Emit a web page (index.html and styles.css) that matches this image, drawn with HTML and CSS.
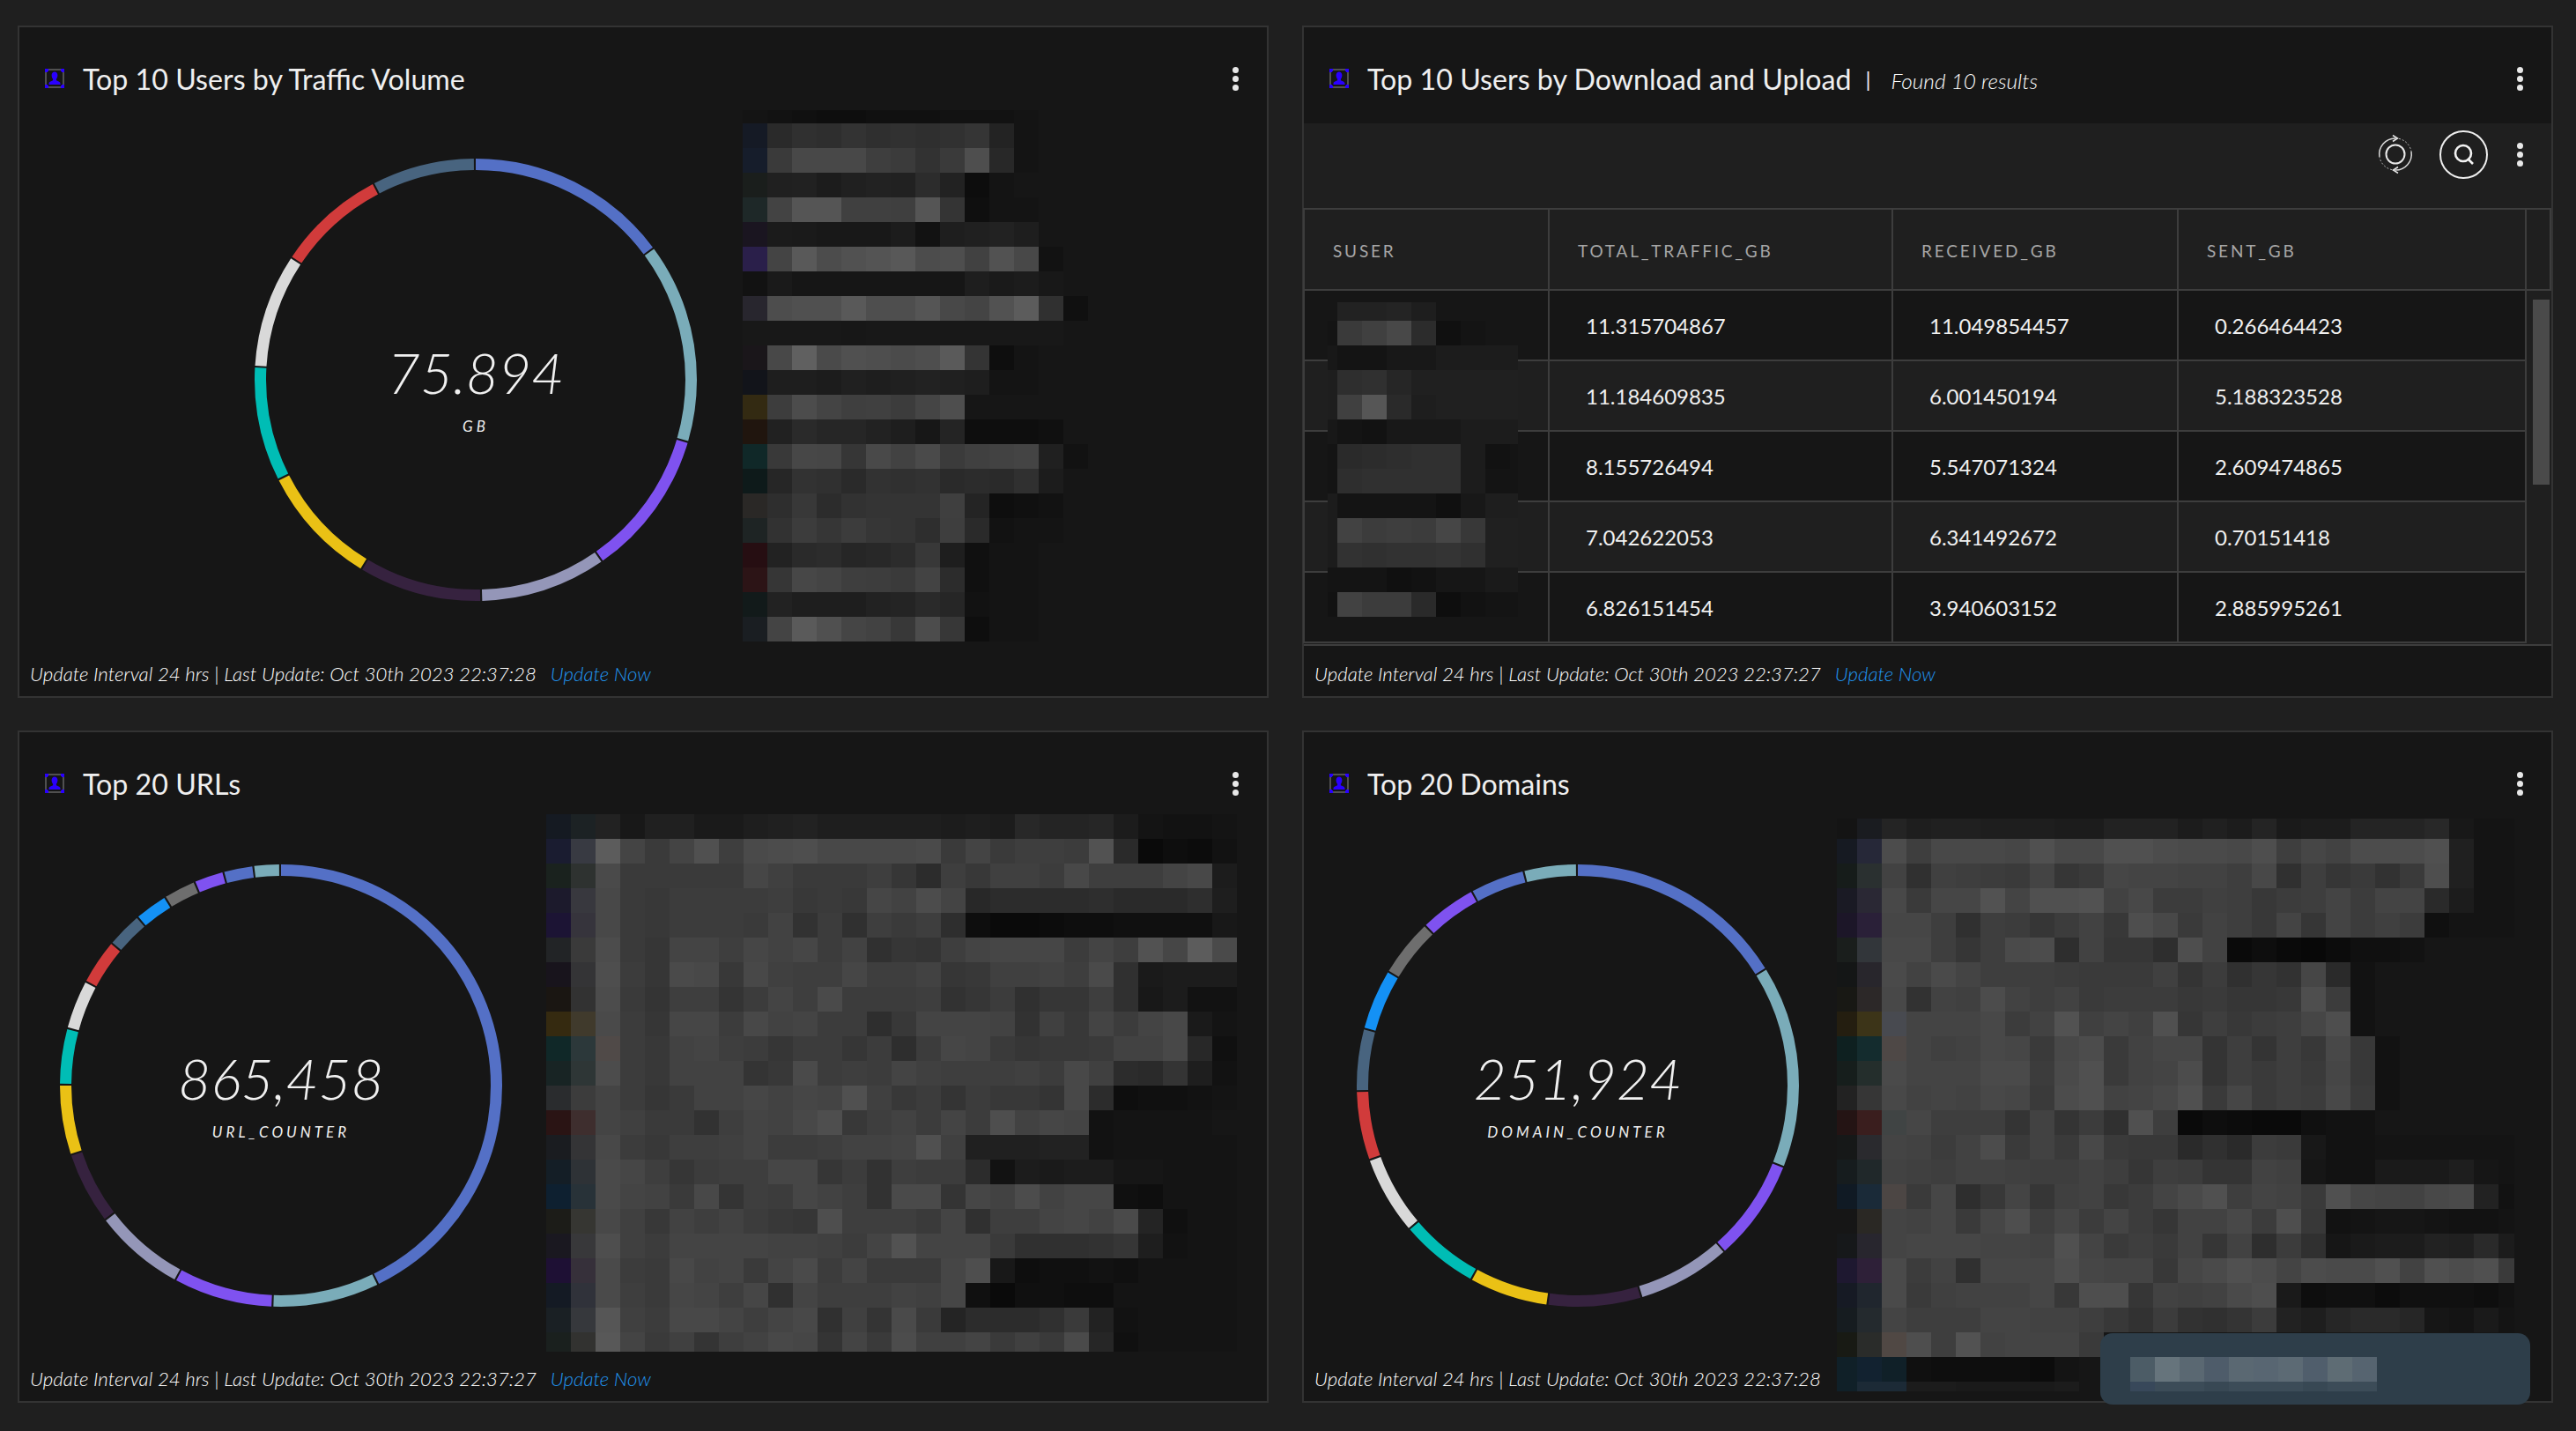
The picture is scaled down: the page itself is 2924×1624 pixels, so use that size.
FILE: index.html
```html
<!DOCTYPE html>
<html lang="en">
<head>
    <meta charset="UTF-8">
    <title>User Traffic Dashboard</title>
    <link rel="stylesheet" href="styles.css">
</head>
<body>
    <svg class="sprite" width="0" height="0">
        <symbol id="user-icon" viewBox="0 0 22 22">
            <rect x="1" y="1" width="20" height="20" fill="none" stroke="#8a8a8a"/>
            <path d="M0 0h4v3H3v1H0zM18 0h4v4h-3V3h-1zM0 18h3v1h1v3H0zM19 18h3v4h-4v-3h1z" fill="#2a00ff"/>
            <path d="M11 3.5c2.2 0 3.4 1.9 3.4 4 0 1.800-.8 3.300-1.500 4.200v1.500c2.400.8 4.600 1.700 4.600 3.600v1.200h-13v-1.200c0-1.900 2.200-2.800 4.600-3.600v-1.500c-.7-.9-1.500-2.400-1.500-4.200 0-2.100 1.200-4 3.400-4z" fill="#2a00ff"/>
        </symbol>
    </svg>

    <div class="dashboard">
        <section class="card">
            <header class="card-head">
                <svg class="user-icon"><use href="#user-icon"/></svg>
                <h2 class="card-title">Top 10 Users by Traffic Volume</h2>
                <div class="dots"><span></span><span></span><span></span></div>
            </header>
            <div class="chart-body">
                <div class="donut-wrap donut-traffic">
                    <svg class="donut" id="donut-traffic" viewBox="0 0 502 502"></svg>
                    <div class="donut-center">
                        <div class="donut-value">75.894</div>
                        <div class="donut-label">GB</div>
                    </div>
                </div>
                <div class="mosaic mosaic-traffic" id="mosaic-traffic"></div>
            </div>
            <footer class="card-foot">
                <span>Update Interval 24 hrs | Last Update: Oct 30th 2023 22:37:28</span>
                <a class="update-link">Update Now</a>
            </footer>
        </section>

        <section class="card">
            <header class="card-head">
                <svg class="user-icon"><use href="#user-icon"/></svg>
                <h2 class="card-title">Top 10 Users by Download and Upload</h2>
                <span class="title-sep">|</span>
                <span class="title-note">Found 10 results</span>
                <div class="dots"><span></span><span></span><span></span></div>
            </header>
            <div class="toolbar">
                <svg class="refresh-icon" viewBox="0 0 44 44">
                    <circle cx="22" cy="22" r="10.500" fill="none" stroke="#e8e8e8" stroke-width="2"/>
                    <path d="M4 25A18 18 0 0 1 22 4M40 19A18 18 0 0 1 22 40" fill="none" stroke="#d8d8d8" stroke-width="1.500"/>
                    <path d="M22 4A18 18 0 0 1 40 19M22 40A18 18 0 0 1 4 25" fill="none" stroke="#bdbdbd" stroke-width="1" stroke-dasharray="2 2"/>
                    <path d="M19 0.500L24.500 4L19 7.500M25 36.500L19.500 40L25 43.500" fill="none" stroke="#e8e8e8" stroke-width="1.500"/>
                </svg>
                <div class="search-btn">
                    <svg viewBox="0 0 28 28">
                        <circle cx="13" cy="13" r="9" fill="none" stroke="#f2f2f2" stroke-width="2.600"/>
                        <path d="M18 19L24 25" stroke="#f2f2f2" stroke-width="2.600"/>
                    </svg>
                </div>
                <div class="dots"><span></span><span></span><span></span></div>
            </div>
            <div class="table-wrap">
                <table class="data-table">
                    <thead>
                        <tr>
                            <th class="col-user">SUSER</th>
                            <th class="col-total">TOTAL_TRAFFIC_GB</th>
                            <th class="col-recv">RECEIVED_GB</th>
                            <th class="col-sent">SENT_GB</th>
                            <th class="col-gutter"></th>
                        </tr>
                    </thead>
                    <tbody>
                        <tr><td></td><td>11.315704867</td><td>11.049854457</td><td>0.266464423</td></tr>
                        <tr><td></td><td>11.184609835</td><td>6.001450194</td><td>5.188323528</td></tr>
                        <tr><td></td><td>8.155726494</td><td>5.547071324</td><td>2.609474865</td></tr>
                        <tr><td></td><td>7.042622053</td><td>6.341492672</td><td>0.70151418</td></tr>
                        <tr><td></td><td>6.826151454</td><td>3.940603152</td><td>2.885995261</td></tr>
                    </tbody>
                </table>
                <div class="mosaic mosaic-users" id="mosaic-users"></div>
                <div class="scroll-thumb"></div>
            </div>
            <footer class="card-foot">
                <span>Update Interval 24 hrs | Last Update: Oct 30th 2023 22:37:27</span>
                <a class="update-link">Update Now</a>
            </footer>
        </section>

        <section class="card">
            <header class="card-head">
                <svg class="user-icon"><use href="#user-icon"/></svg>
                <h2 class="card-title">Top 20 URLs</h2>
                <div class="dots"><span></span><span></span><span></span></div>
            </header>
            <div class="chart-body">
                <div class="donut-wrap donut-urls">
                    <svg class="donut" id="donut-urls" viewBox="0 0 502 502"></svg>
                    <div class="donut-center">
                        <div class="donut-value">865,458</div>
                        <div class="donut-label">URL_COUNTER</div>
                    </div>
                </div>
                <div class="mosaic mosaic-urls" id="mosaic-urls"></div>
            </div>
            <footer class="card-foot">
                <span>Update Interval 24 hrs | Last Update: Oct 30th 2023 22:37:27</span>
                <a class="update-link">Update Now</a>
            </footer>
        </section>

        <section class="card">
            <header class="card-head">
                <svg class="user-icon"><use href="#user-icon"/></svg>
                <h2 class="card-title">Top 20 Domains</h2>
                <div class="dots"><span></span><span></span><span></span></div>
            </header>
            <div class="chart-body">
                <div class="donut-wrap donut-domains">
                    <svg class="donut" id="donut-domains" viewBox="0 0 502 502"></svg>
                    <div class="donut-center">
                        <div class="donut-value">251,924</div>
                        <div class="donut-label">DOMAIN_COUNTER</div>
                    </div>
                </div>
                <div class="mosaic mosaic-domains" id="mosaic-domains"></div>
            </div>
            <footer class="card-foot">
                <span>Update Interval 24 hrs | Last Update: Oct 30th 2023 22:37:28</span>
            </footer>
            <div class="toast">
                <div class="mosaic mosaic-toast" id="mosaic-toast"></div>
            </div>
        </section>
    </div>

    <script src="script.js"></script>
</body>
</html>
```

FILE: styles.css
```css
* {
    box-sizing: border-box;
}

html, body {
    margin: 0;
    height: 100%;
}

body {
    background-color: #1f1f1f;
    color: #efefef;
    font-family: "Lato", "Liberation Sans", sans-serif;
    overflow: hidden;
}

.sprite {
    position: absolute;
}

.dashboard {
    display: grid;
    grid-template-columns: 1420px 1420px;
    grid-template-rows: 763px 763px;
    column-gap: 38px;
    row-gap: 37px;
    padding: 29px 0 0 20px;
}

.card {
    position: relative;
    display: flex;
    flex-direction: column;
    background-color: #161616;
    border: 2px solid #333333;
}

/* card header */
.card-head {
    display: flex;
    align-items: center;
    flex: none;
    height: 109px;
    padding: 7px 32px 0 29px;
}

.user-icon {
    width: 22px;
    height: 22px;
    flex: none;
}

.card-title {
    margin: 0 0 0 21px;
    font-size: 32.200px;
    font-weight: 400;
    color: #efefef;
}

.title-sep {
    margin-left: 16px;
    font-size: 24px;
    font-weight: 400;
}

.title-note {
    margin-left: 23px;
    margin-top: 5px;
    font-size: 24.400px;
    font-style: italic;
    font-weight: 300;
    color: #ffffff;
}

.dots {
    display: flex;
    flex-direction: column;
    gap: 3px;
    margin-left: auto;
}

.dots span {
    width: 7px;
    height: 7px;
    border-radius: 50%;
    background-color: #e8e8e8;
}

/* donut charts */
.chart-body {
    display: flex;
    flex: 1;
    min-height: 0;
    align-items: flex-start;
}

.donut-wrap {
    position: relative;
    flex: none;
    width: 502px;
    height: 502px;
    margin-top: 40px;
}

.donut-traffic {
    margin-left: 267px;
}

.donut-urls {
    margin: 41px 0 0 46px;
}

.donut-domains {
    margin: 41px 0 0 60px;
}

.donut {
    display: block;
    width: 502px;
    height: 502px;
}

.donut-center {
    position: absolute;
    left: 0;
    right: 0;
    top: 205px;
    text-align: center;
    font-style: italic;
    font-weight: 300;
}

.donut-value {
    font-size: 64px;
    line-height: 76px;
    color: #f0f0f0;
}

.donut-label {
    margin-top: 12px;
    font-size: 17px;
    line-height: 22px;
    font-weight: 400;
    letter-spacing: 4px;
}

/* redacted legends */
.mosaic {
    display: grid;
    flex: none;
    position: relative;
    z-index: 1;
}

.mosaic-traffic {
    grid-template-columns: repeat(15, 28px);
    grid-template-rows: 15px repeat(21, 28px);
    margin: -15px 0 0 52px;
}

.mosaic-urls {
    grid-template-columns: repeat(28, 28px);
    grid-template-rows: repeat(21, 28px) 22px;
    margin: -16px 0 0 50px;
}

.mosaic-domains {
    grid-template-columns: 23px repeat(26, 28px) 18px;
    grid-template-rows: 23px repeat(22, 28px) 11px;
    margin: -11px 0 0 43px;
}

.mosaic-users {
    position: absolute;
    left: 27px;
    top: 107px;
    grid-template-columns: 11px repeat(7, 28px) 9px;
    grid-template-rows: 21px repeat(12, 28px) 4px;
}

.mosaic-toast {
    grid-template-columns: repeat(10, 28px);
    grid-template-rows: 28px 11px;
    margin: 27px 0 0 34px;
}

.toast {
    position: absolute;
    left: 904px;
    top: 682px;
    width: 488px;
    height: 81px;
    z-index: 2;
    background-color: #2e3e4a;
    border-radius: 14px;
}

/* table card */
.toolbar {
    display: flex;
    align-items: center;
    justify-content: flex-end;
    flex: none;
    height: 96px;
    padding: 0 32px 26px 0;
    background-color: #1f1f1f;
}

.toolbar .dots {
    margin-left: 33px;
}

.refresh-icon {
    width: 44px;
    height: 44px;
}

.search-btn {
    display: flex;
    align-items: center;
    justify-content: center;
    width: 55px;
    height: 55px;
    margin-left: 28px;
    border: 2px solid #eeeeee;
    border-radius: 50%;
}

.search-btn svg {
    width: 28px;
    height: 28px;
}

.table-wrap {
    position: relative;
    flex: none;
    height: 497px;
    border-bottom: 2px solid #3d3d3d;
    background-color: #1f1f1f;
}

.data-table {
    border-collapse: collapse;
    table-layout: fixed;
    width: 1415px;
    margin-left: -1px;
    background-color: #1f1f1f;
    font-size: 24px;
}

.data-table th {
    height: 92px;
    padding: 2px 0 0 32px;
    border: 2px solid #3d3d3d;
    text-align: left;
    font-size: 19px;
    font-weight: 400;
    letter-spacing: 2.800px;
    color: #a6a6a6;
}

.data-table td {
    height: 80px;
    padding: 0 0 0 41px;
    border: 2px solid #3d3d3d;
    color: #f0f0f0;
}

.data-table tbody tr:nth-child(odd) td {
    background-color: #161616;
}

.col-user {
    width: 278px;
}

.col-total {
    width: 390px;
}

.col-recv {
    width: 324px;
}

.col-sent {
    width: 395px;
}

.data-table .col-gutter {
    width: 28px;
    padding: 0;
}

.scroll-thumb {
    position: absolute;
    left: 1395px;
    top: 104px;
    width: 19px;
    height: 210px;
    background-color: #4a4a4a;
}

/* footer */
.card-foot {
    display: flex;
    align-items: center;
    gap: 16px;
    margin-top: auto;
    height: 57px;
    padding: 5px 0 0 12px;
    font-size: 22.200px;
    font-style: italic;
    font-weight: 300;
    color: #ffffff;
    white-space: nowrap;
}

.update-link {
    color: #2196f3;
}
```

FILE: script.js
```js
// colours used by the donut segments
var COLORS = {
    blue: "#5470c6", teal: "#7aacb9", purple: "#7f52f0", lav: "#9496b8",
    dark: "#36223f", yellow: "#eac115", green: "#00bdb5", white: "#d9d9d9",
    red: "#d13b3b", slate: "#48647f", sky: "#1491f5", grey: "#6e6e6e"
};

// [colour, end angle in degrees from the top, clockwise]
var DONUTS = {
    "donut-traffic": [["blue", 53.7], ["teal", 106.6], ["purple", 145.4], ["lav", 178.8], ["dark", 211.4],
        ["yellow", 243.4], ["green", 273.7], ["white", 303.8], ["red", 332.7], ["slate", 360]],
    "donut-urls": [["blue", 154.2], ["teal", 182.5], ["purple", 208.8], ["lav", 232.9], ["dark", 252],
        ["yellow", 270.5], ["green", 285.3], ["white", 298.3], ["red", 310.3], ["slate", 319.8],
        ["sky", 328.6], ["grey", 337.2], ["purple", 345.1], ["blue", 353], ["teal", 360]],
    "donut-domains": [["blue", 58.4], ["teal", 111.8], ["purple", 138.8], ["lav", 163.5], ["dark", 188.2],
        ["yellow", 209.1], ["green", 229.9], ["white", 250.6], ["red", 268.8], ["slate", 285.2],
        ["sky", 301.3], ["grey", 316.6], ["purple", 331.6], ["blue", 346], ["teal", 360]]
};

// two hex digits = a grey level, six = a full colour
var MOSAICS = {
    "mosaic-traffic": [
        "14 12 10 0e 0e 10 10 10 12 12 12 14 16 16 16",
        "151a25 2a 30 2e 33 2f 31 2f 31 35 23 14",
        "161d2b 3a 48 48 48 3e 3b 32 3a 4e 28 14",
        "1a1e1c 20 21 1c 20 22 21 2c 22 0d 14 16",
        "1e2828 43 55 55 40 40 3f 55 34 0f 14 14",
        "1a1520 1b 1a 18 18 18 1c 12 1e 20 22 1e",
        "2a1f4a 44 59 4c 51 54 58 4c 4e 41 52 48 12",
        "12 1a 16 16 16 16 16 16 16 1e 1a 1c 18 16",
        "28262e 4d 50 50 59 4e 4e 55 48 44 52 5c 30 10",
        "18 18 18 18 17 18 18 18 18 18 18 18 18 16",
        "1a161a 48 60 4a 50 4e 4b 4e 5a 34 0e 14",
        "12141a 1e 1e 1c 20 1e 20 22 20 1e 14 14",
        "332a12 3d 4c 44 3f 40 3c 45 4e 16 16 16",
        "20150e 21 2a 26 26 22 1e 17 24 0e 0e 0e 10",
        "102828 39 47 46 36 49 42 4a 3b 40 42 44 20 12",
        "0e1a1a 26 32 30 2a 32 30 32 2a 2c 2a 30 1c",
        "2a2826 2e 38 2c 32 34 34 34 3f 24 0e 10 12",
        "1e2424 32 3c 36 3c 36 34 2e 3e 2a 12 14 14",
        "260e12 22 2a 2c 26 28 2c 38 1e 10 14 14",
        "2c1416 36 47 44 3e 3d 3a 43 2c 10 14 14",
        "121a1a 22 1e 1e 1e 22 24 2a 26 12 14 14",
        "1a1e22 44 5a 50 45 42 38 4c 37 0e 14 14"
    ],
    "mosaic-users": [
        "16 22 22 24 1e 16 16 16 16",
        "14 3a 40 48 2c 10 14 16 16",
        "18 14 14 18 18 1c 1c 1c 1c",
        "1e 2e 30 26 20 20 20 20 20",
        "1e 40 56 2a 1e 20 20 20 20",
        "18 14 12 18 18 18 1c 1c 1c",
        "14 2a 2c 2e 30 30 1c 12 14",
        "14 2e 30 30 30 30 1c 14 14",
        "1c 14 14 14 14 10 18 1e 1e",
        "1c 42 3c 3e 3c 46 38 20 20",
        "1c 32 30 32 32 34 30 20 20",
        "14 14 14 10 12 16 16 1a 1a",
        "12 42 3c 3c 2a 0e 12 14 14",
        "16 16 16 16 16 16 16 16 16"
    ],
    "mosaic-urls": [
        "151a22 1c2224 22 18 20 20 1a 1a 1e 20 22 1e 1e 1e 1e 1e 1c 1e 1c 28 24 24 26 1c 14 12 12 14",
        "1a1c30 383a42 5c 44 3a 44 50 3e 4a 4c 4e 48 48 48 48 4a 3a 44 3a 3e 3e 3c 52 2a 0a 0e 0c 12",
        "1a221e 2e3230 4a 3a 3a 3a 3a 3a 46 40 3a 3a 3a 3e 36 2c 3e 38 40 40 3c 48 3e 3e 3e 44 48 1c",
        "1c1a2c 38383e 48 3a 38 3c 3c 3c 3c 3e 38 3a 38 46 42 4c 44 28 2c 2c 2c 2c 2e 2a 2a 2a 2e 1e",
        "1c1434 36343c 48 3a 38 3c 3c 3c 3a 42 32 3c 30 3e 3a 3e 2e 0e 0a 0a 0c 0e 0e 10 10 10 10 18",
        "222426 3a3a3a 4c 3a 36 44 44 3e 46 42 46 3c 42 30 36 34 3e 44 46 46 46 3c 44 3e 52 46 5c 4a",
        "18141c 343436 4e 3c 36 4a 48 38 48 40 3e 3e 46 3e 3e 42 36 38 40 40 42 3e 4a 30 1a 1c 1c 1c",
        "1a1612 323232 4c 3a 34 3e 3e 34 3c 44 3e 4a 3c 3c 3c 3e 32 36 3c 30 36 36 3e 30 18 1c 12 12",
        "352a10 403a2c 4a 3c 36 46 46 3c 48 42 44 3c 3c 2e 38 44 44 44 42 32 40 38 44 3c 44 48 1a 14",
        "102828 2c383a 504a48 3c 38 42 44 3e 3c 36 3c 3c 36 3c 2e 3c 46 44 3a 36 38 38 3a 42 42 48 28 10",
        "182424 2e3636 4c 3c 38 42 42 42 34 38 4a 3c 3e 3c 44 40 3e 3e 3e 40 3c 48 40 2c 2a 34 1e 12",
        "2a2c2e 3c3c3c 44 3c 36 3a 42 42 46 42 46 44 50 40 38 3c 34 3c 38 38 34 48 2c 0e 10 10 12 14",
        "2a1414 3e2e2e 44 40 3a 3a 32 3e 44 42 48 4e 38 3e 42 3c 44 3c 4e 42 46 44 12 14 14 14 14 16",
        "1a1c20 343436 48 3c 38 3e 3e 40 44 3c 3c 3e 42 42 44 50 40 20 20 20 22 22 12 14 14 14 14 14",
        "141e26 2e3236 4a 46 3e 36 3c 3e 3e 46 46 36 3c 32 3e 3c 3c 2c 12 1c 1a 1c 1c 16 16 14 14 14",
        "0e2030 283238 4a 44 42 3a 48 34 3e 3c 46 42 3e 32 4a 4a 34 46 42 4c 42 46 46 10 0e 14 14 14",
        "1c1c18 363632 48 40 38 42 3e 42 3c 38 36 4e 3e 3e 3e 3a 44 30 3e 3e 44 46 42 4a 24 10 14 14",
        "1a1820 38383a 4e 40 3c 44 44 44 44 42 42 40 3c 44 52 44 44 44 3a 30 30 30 32 36 1e 12 14 14",
        "1e1034 36303a 4a 3c 3a 48 42 44 3a 44 4a 3c 44 3a 3a 3a 46 4e 18 0e 10 10 12 10 14 14 14 14",
        "141a24 30323a 4a 3e 3a 46 44 3e 46 30 44 3e 3e 3e 42 40 46 10 0a 10 10 0e 0e 14 14 14 14 14",
        "1a2024 36383c 56 40 3c 48 48 44 3e 44 48 30 40 34 4a 3a 24 2c 2c 2c 30 3a 22 12 14 14 14 14",
        "1a201e 323230 58 44 3a 40 34 3e 42 48 46 34 44 3a 4c 40 40 44 3a 40 3a 4a 26 10 14 14 14 14"
    ],
    "mosaic-domains": [
        "14 1a1c20 24 1e 20 20 1e 1e 1e 1c 1c 22 22 22 1c 20 1c 24 1a 1c 1c 24 24 24 28 18 14 14 14 14",
        "161a22 262838 4c 3e 48 48 48 46 50 48 48 50 50 4c 4a 4a 48 4e 3e 46 42 4c 4c 4c 50 20 14 14 14 14",
        "161c1a 2a3030 42 30 40 3e 3c 3a 44 36 3a 46 44 44 42 42 3e 48 30 3e 36 3a 32 3a 4e 20 14 14 14 14",
        "1a1a24 2a2834 48 3a 46 46 52 44 50 50 52 42 48 3c 3c 40 3e 38 3c 3e 44 3c 44 44 2a 1c 14 14 14 14",
        "1c1628 2a2038 46 46 3e 30 3e 3c 36 3c 42 38 4e 48 3a 42 3e 38 44 36 44 3c 40 3c 10 14 14 14 14 14",
        "1a1e1c 32363a 48 48 3e 36 3e 4a 4c 2e 42 36 36 2e 4e 42 0a 0e 0a 08 0c 10 10 12 16 16 16 16 16 16",
        "141616 28262c 4a 42 4a 44 3e 3e 3e 3c 3a 3a 3a 40 34 3c 30 36 32 46 2a 12 16 16 16 16 16 16 16 16",
        "181814 2c2828 48 32 42 40 4c 42 3e 42 3a 3c 3c 3c 38 3a 36 36 38 4e 3c 12 16 16 16 16 16 16 16 16",
        "241e10 3c3418 484a50 44 44 44 48 3c 42 52 40 44 40 50 36 3e 38 3c 3e 46 4e 12 16 16 16 16 16 16 16",
        "0e2020 142c2e 4e4846 44 40 42 48 46 3a 48 4c 3a 42 46 46 34 3e 34 3e 38 48 38 12 16 16 16 16 16 16",
        "161e1c 242e2c 4a 44 44 44 4a 4a 3c 4a 50 3a 42 44 4c 34 3e 3a 3e 3a 46 38 12 16 16 16 16 16 16 16",
        "222222 363636 48 42 44 42 48 46 3a 4c 50 42 44 48 50 3a 46 3a 3e 3c 48 3a 12 16 16 16 16 16 16 16",
        "241414 3a1e1e 404444 46 3e 3e 3e 34 42 34 3c 30 50 3e 0a 0e 0c 0a 0a 10 12 12 16 16 16 16 16 16",
        "161818 2a2a2e 44 42 3c 42 4c 3a 42 3a 48 3a 38 38 2a 30 2a 3c 3a 18 12 12 14 14 14 14 14 14",
        "161c1e 20282a 42 40 3e 42 42 40 3e 3e 42 3e 36 3e 3c 34 34 42 40 16 12 12 1a 1a 1a 1e 16 14",
        "101a24 1a2a38 4c4644 3a 46 2e 38 44 36 40 42 38 3c 44 4a 50 3e 44 42 3a 50 46 44 42 48 4a 22 12",
        "161616 2a2824 44 42 46 3a 46 4e 3e 46 3c 44 3c 36 42 42 48 3c 4e 38 12 14 16 16 14 12 12 14",
        "16181a 28262e 44 46 46 46 44 44 42 50 44 3a 3e 3a 42 36 42 2e 3c 30 16 1a 1c 1c 22 20 2a 1c",
        "1e1830 2e2038 4a 3c 42 30 46 46 46 4e 46 44 44 38 46 4a 50 4c 44 4c 4a 4a 50 42 50 4c 50 3a",
        "161a24 20262e 4a 3a 40 42 42 42 46 38 4e 4e 36 42 40 42 4a 4e 1a 0e 10 10 0c 10 10 10 0e 12",
        "161c20 242a2e 44 3e 3e 3e 44 44 42 42 3e 38 32 3c 32 30 34 3c 22 1e 26 2a 2a 26 16 14 1a 14",
        "181a14 2a2c2a 504844 4e 3e 52 42 44 44 44 3a 16 16 16 16 16 16 16 16 16 16 16 16 16 16 16 16 14",
        "102028 122230 102028 10 0e 0e 0e 0e 0c 14 16 16 16 16 16 16 16 16 16 16 16 16 16 16 16 16 16 14",
        "102028 1c2a36 1c2a36 1c 1c 1a 1a 1a 1a 1c 16 16 16 16 16 16 16 16 16 16 16 16 16 16 16 16 16 14"
    ],
    "mosaic-toast": [
        "4c5c66 66747c 5a6872 4e5c6a 5a6872 586672 5c6a74 505e6c 5e6c74 566470",
        "38485a 3c4c58 3c4c58 384854 3c4c58 3c4c58 3c4c58 384854 3c4c58 3c4c58"
    ]
};

function drawDonut(id, arcs) {
    var svg = document.getElementById(id);
    var start = 0;
    var html = "";
    arcs.forEach(function (arc) {
        var len = arc[1] - start - 0.5;
        html += '<circle cx="251" cy="251" r="244.500" fill="none" stroke-width="13" pathLength="360"' +
            ' stroke="' + COLORS[arc[0]] + '" stroke-dasharray="' + len + ' 360"' +
            ' stroke-dashoffset="' + (-start) + '" transform="rotate(-90 251 251)"/>';
        start = arc[1];
    });
    svg.innerHTML = html;
}

function drawMosaic(id, rows) {
    var box = document.getElementById(id);
    // rows that are short or long are fitted to the columns set in the stylesheet
    var cols = getComputedStyle(box).gridTemplateColumns.split(" ").length;
    rows.forEach(function (row) {
        var cells = row.split(" ");
        for (var i = 0; i < cols; i++) {
            var cell = document.createElement("div");
            var c = cells[i];
            if (c) {
                cell.style.backgroundColor = "#" + (c.length == 2 ? c + c + c : c);
            }
            box.appendChild(cell);
        }
    });
}

Object.keys(DONUTS).forEach(function (id) { drawDonut(id, DONUTS[id]); });
Object.keys(MOSAICS).forEach(function (id) { drawMosaic(id, MOSAICS[id]); });
```
